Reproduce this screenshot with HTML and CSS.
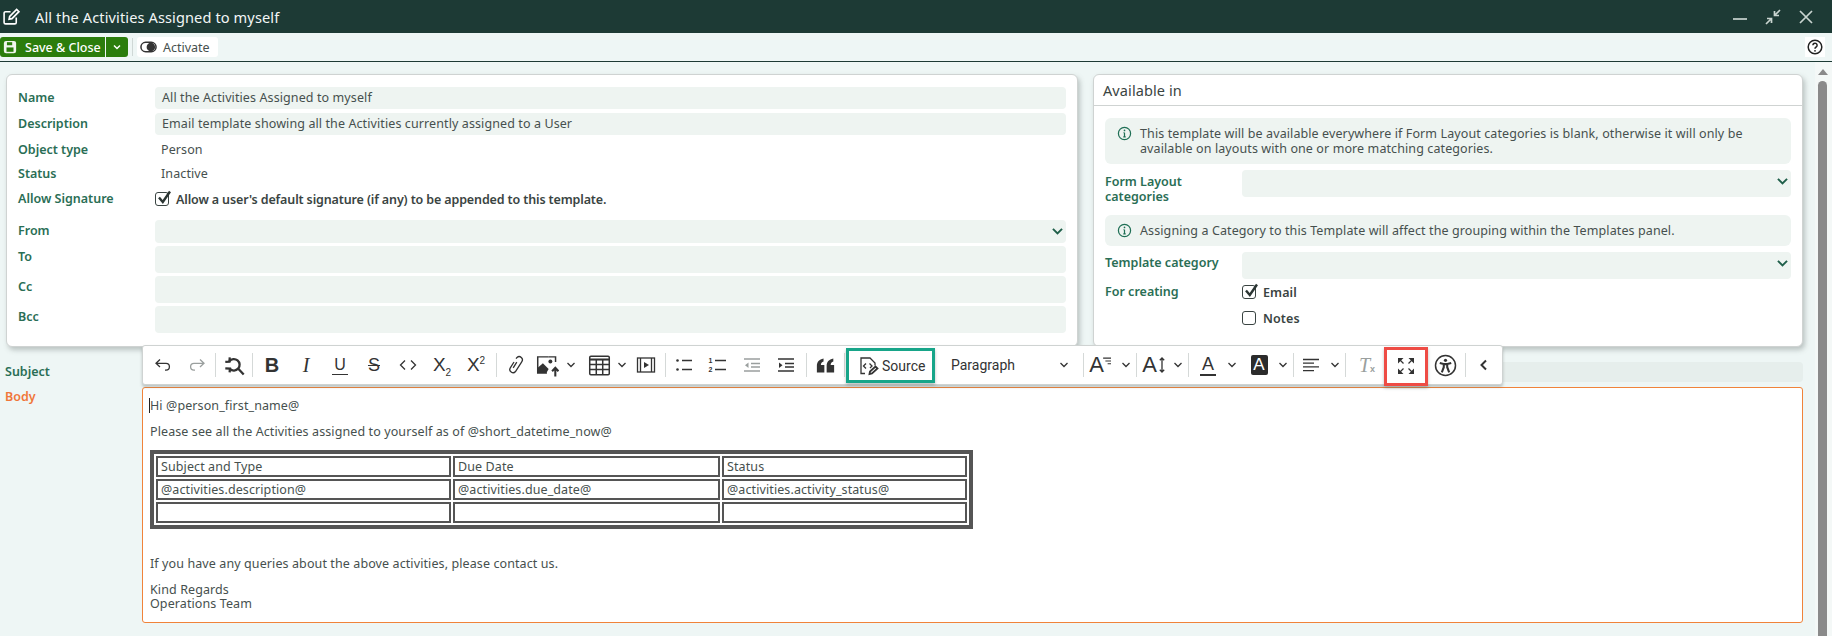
FILE: index.html
```html
<!DOCTYPE html>
<html lang="en">
<head>
    <meta charset="UTF-8">
    <meta name="viewport" content="width=device-width, initial-scale=1.0">
    <title>All the Activities Assigned to myself</title>
    <link rel="stylesheet" href="styles.css">
</head>
<body>
    <header class="title-bar">
        <svg class="ic title-icon" viewBox="0 0 20 20"><path d="M15 11v5.2a1.6 1.6 0 0 1-1.6 1.6H3.800a1.6 1.6 0 0 1-1.6-1.6V6.600A1.6 1.6 0 0 1 3.800 5H9"/><path class="thick" d="M7.500 12.800l.6-3L15.400 2.500l2.400 2.400-7.300 7.300z"/></svg>
        <h1>All the Activities Assigned to myself</h1>
        <div class="window-controls">
            <svg class="ic" viewBox="0 0 20 20"><path d="M3 12h14"/></svg>
            <svg class="ic" viewBox="0 0 20 20"><path d="M3 17l5.500-5.500M8.500 16v-4.500H4M17 3l-5.500 5.500M11.500 4v4.500H16"/></svg>
            <svg class="ic" viewBox="0 0 20 20"><path d="M4 4l12 12M16 4L4 16"/></svg>
        </div>
    </header>

    <div class="action-bar">
        <button class="btn-save">
            <svg class="ic" viewBox="0 0 16 16"><rect class="solid" x="1" y="1" width="14" height="14" rx="2.500"/><rect class="cut" x="4.500" y="2.500" width="6" height="3.500"/><rect class="cut" x="4" y="8.500" width="8" height="5"/></svg>
            Save &amp; Close
        </button>
        <button class="btn-save-more"><svg class="ic" viewBox="0 0 10 10"><path d="M2 3.500l3 3 3-3"/></svg></button>
        <span class="bar-sep"></span>
        <button class="btn-plain">
            <svg class="toggle-icon" viewBox="0 0 18 12"><rect x="1" y="1" width="16" height="10" rx="5" fill="none" stroke="#333" stroke-width="1.600"/><circle cx="11.500" cy="6" r="4.500" fill="#333"/></svg>
            Activate
        </button>
        <span class="help-box"><svg viewBox="0 0 16 16"><circle cx="8" cy="8" r="6.800" fill="none" stroke="#222" stroke-width="1.500"/><path d="M5.900 6.300a2.100 2.100 0 1 1 3.300 1.700c-.8.500-1.200.9-1.200 1.700" fill="none" stroke="#222" stroke-width="1.500"/><circle cx="8" cy="11.800" r=".9" fill="#222"/></svg></span>
    </div>

    <div class="page">
        <main class="content">
            <div class="cards">
                <section class="card card-main">
                    <div class="row"><label>Name</label><div class="field">All the Activities Assigned to myself</div></div>
                    <div class="row"><label>Description</label><div class="field">Email template showing all the Activities currently assigned to a User</div></div>
                    <div class="row row-object"><label>Object type</label><div class="static">Person</div></div>
                    <div class="row row-tight"><label>Status</label><div class="static">Inactive</div></div>
                    <div class="row row-sign">
                        <label>Allow Signature</label>
                        <div class="check-line">
                            <span class="checkbox checked"><svg viewBox="0 0 16 16"><path d="M3 7.500l3.800 4.500L14 1.500"/></svg></span>
                            <strong>Allow a user's default signature (if any) to be appended to this template.</strong>
                        </div>
                    </div>
                    <div class="row row-mail">
                        <label>From</label>
                        <div class="field field-select">
                            <svg class="ic chev" viewBox="0 0 10 10"><path d="M1.500 3l3.500 3.500L8.500 3"/></svg>
                        </div>
                    </div>
                    <div class="row row-mail"><label>To</label><div class="field field-tall"></div></div>
                    <div class="row row-mail"><label>Cc</label><div class="field field-tall"></div></div>
                    <div class="row row-mail"><label>Bcc</label><div class="field field-tall"></div></div>
                </section>

                <section class="card card-side">
                    <h2>Available in</h2>
                    <div class="card-body">
                        <div class="info">
                            <svg class="info-icon" viewBox="0 0 16 16"><circle cx="8" cy="8" r="6.500"/><path d="M8 7.200v4.300M6.700 11.500h2.600M6.900 7.200H8"/><circle class="dot" cx="8" cy="4.700" r=".9"/></svg>
                            <p>This template will be available everywhere if Form Layout categories is blank, otherwise it will only be available on layouts with one or more matching categories.</p>
                        </div>
                        <div class="row row-layout">
                            <label class="label-wrap">Form Layout categories</label>
                            <div class="field field-tall field-select">
                                <svg class="ic chev" viewBox="0 0 10 10"><path d="M1.500 3l3.500 3.500L8.500 3"/></svg>
                            </div>
                        </div>
                        <div class="info">
                            <svg class="info-icon" viewBox="0 0 16 16"><circle cx="8" cy="8" r="6.500"/><path d="M8 7.200v4.300M6.700 11.500h2.600M6.900 7.200H8"/><circle class="dot" cx="8" cy="4.700" r=".9"/></svg>
                            <p>Assigning a Category to this Template will affect the grouping within the Templates panel.</p>
                        </div>
                        <div class="row row-category">
                            <label>Template category</label>
                            <div class="field field-tall field-select">
                                <svg class="ic chev" viewBox="0 0 10 10"><path d="M1.500 3l3.500 3.500L8.500 3"/></svg>
                            </div>
                        </div>
                        <div class="row">
                            <label>For creating</label>
                            <div class="check-list">
                                <div class="check-line">
                                    <span class="checkbox checked"><svg viewBox="0 0 16 16"><path d="M3 7.500l3.800 4.500L14 1.500"/></svg></span>
                                    <b>Email</b>
                                </div>
                                <div class="check-line">
                                    <span class="checkbox"></span>
                                    <b>Notes</b>
                                </div>
                            </div>
                        </div>
                    </div>
                </section>
            </div>

            <div class="subject-row">
                <label>Subject</label>
                <div class="field"></div>
            </div>

            <div class="body-row">
                <label>Body</label>
                <div class="editor-wrap">
                    <div class="toolbar">
                        <button class="tb"><svg class="ic" viewBox="0 0 20 20"><path d="M7 4.500L3 8.300l4 3.700M3 8.300h10a3.400 3.400 0 0 1 0 6.800h-1"/></svg></button>
                        <button class="tb off"><svg class="ic" viewBox="0 0 20 20"><path d="M13 4.500l4 3.800-4 3.700M17 8.300H7a3.400 3.400 0 0 0 0 6.800h1"/></svg></button>
                        <span class="sep"></span>
                        <button class="tb"><svg class="ic ic-find" viewBox="0 0 20 20"><path d="M5.500 6.300A5 5 0 1 1 6 13"/><path d="M13.300 12.800l4.700 5M2 6.800l3.600-.2.300-3.600M2 12.500l4 .2-.2 3.300"/></svg></button>
                        <span class="sep"></span>
                        <button class="tb ml1"><span class="t-bold">B</span></button>
                        <button class="tb"><span class="t-italic">I</span></button>
                        <button class="tb"><span class="t-under">U</span></button>
                        <button class="tb"><span class="t-strike">S</span></button>
                        <button class="tb"><svg class="ic" viewBox="0 0 20 20"><path d="M7 5.500L2.500 10 7 14.500M13 5.500l4.500 4.500-4.500 4.500"/></svg></button>
                        <button class="tb"><span class="t-script">X<sub>2</sub></span></button>
                        <button class="tb"><span class="t-script">X<sup>2</sup></span></button>
                        <span class="sep ml2"></span>
                        <button class="tb"><svg class="ic" viewBox="0 0 20 20"><path d="M11 3.600l1-1.100a3.200 3.200 0 0 1 4.700 4.300l-6.200 9.700a3.200 3.200 0 0 1-5.200-3.700L9 7M8.200 12.800l3.600-5.600"/></svg></button>
                        <button class="tb tb-split"><svg class="ic ic-large" viewBox="0 0 20 20"><path d="M11 2.500H1.500v14h8"/><path d="M17 7V2.500h-6"/><path class="solid" d="M1.500 16.500V12L6 8l5 5-2 3.500z"/><circle class="solid" cx="12.500" cy="6.500" r="1.700"/><path class="thick" d="M14 15l2.800-3 2.700 3M16.800 12v7.500"/></svg></button>
                        <button class="tb-chev"><svg class="ic" viewBox="0 0 10 10"><path d="M1.500 3l3.500 3.500L8.500 3"/></svg></button>
                        <button class="tb tb-split ml4"><svg class="ic ic-large" viewBox="0 0 20 20"><rect x="1.500" y="2" width="17" height="16" rx="1"/><path class="thick" d="M1.500 4.800h17"/><path d="M1.500 9.200h17M1.500 13.500h17M7.200 5v13M12.800 5v13"/></svg></button>
                        <button class="tb-chev tb-chev-sm"><svg class="ic" viewBox="0 0 10 10"><path d="M1.500 3l3.500 3.500L8.500 3"/></svg></button>
                        <button class="tb"><svg class="ic" viewBox="0 0 20 20"><rect x="1.500" y="3" width="17" height="14"/><path d="M4.500 3v14M15.500 3v14"/><path class="solid" d="M8 7l5 3-5 3z"/></svg></button>
                        <span class="sep ml1"></span>
                        <button class="tb"><svg class="ic" viewBox="0 0 20 20"><path d="M8 5.500h10M8 14.500h10"/><circle class="solid" cx="3.500" cy="5.500" r="1.300"/><circle class="solid" cx="3.500" cy="14.500" r="1.300"/></svg></button>
                        <button class="tb"><span class="t-num">1<br>2</span><svg class="ic ic-num" viewBox="0 0 14 20"><path d="M2 5.500h11M2 14.500h11"/></svg></button>
                        <button class="tb off"><svg class="ic" viewBox="0 0 20 20"><path d="M2 4h16M9 8.500h9M9 12h9M2 16h16"/><path class="solid" d="M6.500 7.500v5.500L3 10.200z"/></svg></button>
                        <button class="tb"><svg class="ic" viewBox="0 0 20 20"><path d="M2 4h16M9 8.500h9M9 12h9M2 16h16"/><path class="solid" d="M3 7.500v5.500l3.500-2.800z"/></svg></button>
                        <span class="sep ml2"></span>
                        <button class="tb"><svg class="ic ic-large" viewBox="0 0 20 20"><path class="solid" d="M2.500 16V10.500C2.500 7 4.500 4.700 8.300 4v2.600C6.800 7 6 8 6 9.500h3V16zM11 16V10.500C11 7 13 4.700 16.800 4v2.600c-1.500.4-2.300 1.400-2.300 2.900h3V16z"/></svg></button>
                        <span class="sep ml1"></span>
                        <button class="tb-source">
                            <svg class="ic" viewBox="0 0 22 22"><path d="M8 18.500H4V3h9l5 5v2.500"/><path d="M9 8.500l-2.500 2.500L9 13.500M12.500 8.500l2.500 2.500-2 2"/><path class="thick" d="M12.500 19l.5-2.500 5.500-5 2 2-5.500 5z"/></svg>
                            <span>Source</span>
                        </button>
                        <button class="tb-format"><span>Paragraph</span><svg class="ic" viewBox="0 0 10 10"><path d="M1.500 3l3.500 3.500L8.500 3"/></svg></button>
                        <span class="sep"></span>
                        <button class="tb tb-split"><span class="t-font">A</span><svg class="ic ic-lines" viewBox="0 0 8 8"><path d="M1 1h7M3 3.500h5M5 6h3"/></svg></button>
                        <button class="tb-chev ml2"><svg class="ic" viewBox="0 0 10 10"><path d="M1.500 3l3.500 3.500L8.500 3"/></svg></button>
                        <span class="sep"></span>
                        <button class="tb tb-split ml1"><span class="t-font">A</span><svg class="ic ic-arrow" viewBox="0 0 8 20"><path d="M4 3v14M1.800 5.200L4 3l2.200 2.200M1.800 14.800L4 17l2.200-2.200"/></svg></button>
                        <button class="tb-chev"><svg class="ic" viewBox="0 0 10 10"><path d="M1.500 3l3.500 3.500L8.500 3"/></svg></button>
                        <span class="sep"></span>
                        <button class="tb tb-split ml3"><span class="t-color">A</span></button>
                        <button class="tb-chev"><svg class="ic" viewBox="0 0 10 10"><path d="M1.500 3l3.500 3.500L8.500 3"/></svg></button>
                        <button class="tb tb-split ml3"><span class="t-mark">A</span></button>
                        <button class="tb-chev"><svg class="ic" viewBox="0 0 10 10"><path d="M1.500 3l3.500 3.500L8.500 3"/></svg></button>
                        <span class="sep"></span>
                        <button class="tb tb-split ml1"><svg class="ic" viewBox="0 0 20 20"><path d="M2 4.500h16M2 8.200h11M2 11.900h16M2 15.600h11"/></svg></button>
                        <button class="tb-chev"><svg class="ic" viewBox="0 0 10 10"><path d="M1.500 3l3.500 3.500L8.500 3"/></svg></button>
                        <span class="sep"></span>
                        <button class="tb off ml3"><span class="t-clear">T<small>x</small></span></button>
                        <button class="tb-full">
                            <svg class="ic" viewBox="0 0 20 20"><path class="solid" d="M2 7.500V2h5.500zM12.500 2H18v5.500zM18 12.500V18h-5.500zM7.500 18H2v-5.500z"/><path d="M3.500 3.500L7.500 7.500M16.500 3.500L12.500 7.500M16.500 16.500L12.500 12.500M3.500 16.500L7.500 12.500"/></svg>
                        </button>
                        <button class="tb"><svg class="ic ic-large" viewBox="0 0 20 20"><circle cx="10" cy="10" r="8.700"/><circle class="solid" cx="10" cy="5.500" r="1.400"/><path class="thick" d="M5 7.800l3.500 1v2.700L6.800 16M15 7.800l-3.500 1v2.700l1.700 4.500M8.500 8.800h3"/></svg></button>
                        <span class="sep ml2"></span>
                        <button class="tb"><svg class="ic bold" viewBox="0 0 20 20"><path d="M12 5.500L7.500 10l4.500 4.500"/></svg></button>
                    </div>
                    <div class="editor">
                        <p class="greeting"><span class="caret"></span>Hi @person_first_name@</p>
                        <p class="before-table">Please see all the Activities assigned to yourself as of @short_datetime_now@</p>
                        <table>
                            <tr><td class="col-a">Subject and Type</td><td class="col-b">Due Date</td><td>Status</td></tr>
                            <tr><td>@activities.description@</td><td>@activities.due_date@</td><td>@activities.activity_status@</td></tr>
                            <tr><td>&nbsp;</td><td></td><td></td></tr>
                        </table>
                        <p class="after-table">If you have any queries about the above activities, please contact us.</p>
                        <p class="sign-off">Kind Regards<br>Operations Team</p>
                    </div>
                </div>
            </div>
        </main>
        <div class="scrollbar">
            <span class="scroll-up"></span>
            <span class="scroll-thumb"></span>
        </div>
    </div>
</body>
</html>
```

FILE: styles.css
```css
* {
    box-sizing: border-box;
}

html, body {
    height: 100%;
}

body {
    margin: 0;
    overflow: hidden;
    display: flex;
    flex-direction: column;
    background-color: #eef6f5;
    color: #46504e;
    font-family: "Noto Sans", Arial, sans-serif;
    font-size: 12.5px;
    letter-spacing: 0.1px;
}

button {
    font: inherit;
    letter-spacing: inherit;
    border: none;
    background: none;
    padding: 0;
    margin: 0;
    color: inherit;
}

.ic {
    fill: none;
    stroke: currentColor;
    stroke-width: 1.3;
    display: block;
}

.ic .solid {
    fill: currentColor;
    stroke: none;
}

.ic .cut {
    fill: #2b7d0c;
    stroke: none;
}

.ic .thick {
    stroke-width: 1.8;
}

.ic.bold {
    stroke-width: 2;
}

.ml1 {
    margin-left: 1px;
}

.ml2 {
    margin-left: 2px;
}

.ml3 {
    margin-left: 3px;
}

.ml4 {
    margin-left: 4px;
}

/* title bar */
.title-bar {
    height: 33px;
    flex: none;
    display: flex;
    align-items: center;
    background-color: #1d3a35;
    color: #ffffff;
    padding-left: 2px;
}

.title-bar h1 {
    margin: 0 0 0 14px;
    font-size: 14.6px;
    font-weight: 400;
    color: #f2f6f5;
}

.title-icon {
    width: 19px;
    height: 19px;
    stroke-width: 1.7;
}

.window-controls {
    margin-left: auto;
    display: flex;
    gap: 13px;
    padding-right: 16px;
    color: #c9d4d0;
}

.window-controls .ic {
    width: 20px;
    height: 20px;
    stroke-width: 1.700;
}

/* action bar */
.action-bar {
    height: 29px;
    flex: none;
    display: flex;
    align-items: flex-start;
    padding-top: 4px;
    border-bottom: 1px solid #1d3a35;
}

.btn-save {
    height: 20px;
    width: 105px;
    display: flex;
    align-items: center;
    gap: 8px;
    padding-left: 3px;
    background-color: #2b7d0c;
    color: #ffffff;
    font-weight: 500;
    border-radius: 3px 0 0 3px;
    letter-spacing: 0;
}

.btn-save .ic {
    width: 14px;
    height: 14px;
}

.btn-save .ic .solid {
    fill: #f1f6ee;
}

.btn-save-more {
    height: 20px;
    width: 22px;
    margin-left: 1px;
    background-color: #2b7d0c;
    color: #ffffff;
    border-radius: 0 3px 3px 0;
    display: flex;
    align-items: center;
    justify-content: center;
}

.btn-save-more .ic {
    width: 10px;
    height: 10px;
    stroke-width: 1.500;
}

.bar-sep {
    width: 1px;
    height: 18px;
    margin: 1px 4px 0 4px;
    background-color: #cfd8d6;
}

.btn-plain {
    height: 20px;
    width: 81px;
    display: flex;
    align-items: center;
    gap: 6px;
    padding-left: 3px;
    background-color: #ffffff;
    border-radius: 3px;
    letter-spacing: 0;
}

.toggle-icon {
    width: 17px;
    height: 12px;
}

.help-box {
    margin-left: auto;
    margin-right: 7px;
    width: 20px;
    height: 20px;
    background-color: #ffffff;
    padding: 2px;
}

.help-box svg {
    display: block;
}

/* main area */
.page {
    flex: 1;
    min-height: 0;
    display: flex;
}

.content {
    flex: 1;
    min-width: 0;
    padding: 12px 12px 0 0;
}

.cards {
    display: flex;
    gap: 15px;
    height: 273px;
    padding-left: 6px;
}

.card {
    background-color: #ffffff;
    border: 1px solid #cfd3d2;
    border-radius: 6px;
    box-shadow: 2px 3px 5px rgba(90, 100, 98, 0.35);
}

.card-main {
    width: 1072px;
    flex: none;
    padding: 12px 11px 0 11px;
}

.card-side {
    flex: 1;
    min-width: 0;
}

.card-side h2 {
    margin: 0;
    height: 31px;
    line-height: 30px;
    padding-left: 9px;
    font-size: 14.5px;
    font-weight: 400;
    border-bottom: 1px solid #cfd3d2;
    color: #3a4442;
}

.card-body {
    padding: 12px 11px 0 11px;
}

.row {
    display: grid;
    grid-template-columns: 137px 1fr;
    min-height: 22px;
    margin-bottom: 4px;
}

label {
    color: #2a6e55;
    font-weight: 600;
    line-height: 22px;
    white-space: nowrap;
    letter-spacing: 0;
}

.label-wrap {
    white-space: normal;
    line-height: 15px;
    padding-top: 4px;
    width: 90px;
}

.field {
    position: relative;
    height: 22px;
    line-height: 22px;
    padding-left: 7px;
    background-color: #eef4f1;
    border-radius: 4px;
    white-space: nowrap;
}

.field-tall {
    height: 27px;
}

.field-select {
    height: 23px;
}

.field-tall.field-select {
    height: 27px;
}

/* chevron sits over the select box */
.chev {
    position: absolute;
    right: 2px;
    top: 5px;
    width: 13px;
    height: 13px;
    color: #1f5f4a;
    stroke-width: 1.500;
}

.static {
    line-height: 22px;
    padding-left: 6px;
}

.row-object {
    margin-bottom: 2px;
}

.row-tight {
    margin-bottom: 3px;
}

.row-sign {
    margin-bottom: 10px;
}

.row-mail {
    margin-bottom: 3px;
    min-height: 23px;
}

.check-line {
    display: flex;
    align-items: center;
    gap: 7px;
    height: 22px;
    color: #3a4442;
}

.check-line strong {
    font-weight: 600;
    letter-spacing: -0.13px;
}

.check-line b {
    font-weight: 600;
}

.checkbox {
    width: 14px;
    height: 14px;
    flex: none;
    border: 1px solid #3a4442;
    border-radius: 3px;
    background-color: #ffffff;
}

.checkbox svg {
    display: block;
    width: 16px;
    height: 16px;
    margin: -3px 0 0 0;
    overflow: visible;
    fill: none;
    stroke: #2b3533;
    stroke-width: 2.400;
}

.info {
    display: flex;
    gap: 8px;
    padding: 8px 12px 8px 12px;
    margin-bottom: 6px;
    background-color: #eef4f1;
    border-radius: 6px;
}

.info p {
    margin: 0;
    line-height: 15px;
}

.info-icon {
    width: 15px;
    height: 15px;
    flex: none;
    fill: none;
    stroke: #1f6f55;
    stroke-width: 1.300;
}

.info-icon .dot {
    fill: #1f6f55;
    stroke: none;
}

.row-layout {
    min-height: 27px;
    margin-bottom: 11px;
}

.row-category {
    min-height: 27px;
    margin-bottom: 2px;
}

.check-list {
    display: flex;
    flex-direction: column;
    gap: 4px;
}

.subject-row {
    display: grid;
    grid-template-columns: 142px 1fr;
    margin-top: 15px;
}

.subject-row label {
    padding-left: 5px;
    line-height: 20px;
}

.subject-row .field {
    height: 20px;
    background-color: #e6eeec;
}

.body-row {
    display: grid;
    grid-template-columns: 142px 1fr;
    margin-top: 5px;
}

.body-row label {
    padding-left: 5px;
    line-height: 20px;
    color: #f0763a;
}

.editor-wrap {
    position: relative;
}

/* floating editor toolbar */
.toolbar {
    position: absolute;
    top: -42px;
    left: 0;
    width: 1361px;
    height: 40px;
    display: flex;
    align-items: center;
    padding-left: 3px;
    background-color: #ffffff;
    border: 1px solid #cfd3d2;
    border-radius: 3px;
    box-shadow: 0 2px 3px rgba(90, 100, 98, 0.35);
    color: #333333;
    z-index: 2;
    letter-spacing: 0;
}

.tb {
    width: 34px;
    height: 30px;
    flex: none;
    display: flex;
    align-items: center;
    justify-content: center;
}

.tb .ic {
    width: 20px;
    height: 20px;
}

.tb .ic-large {
    width: 23px;
    height: 23px;
}

.tb .ic-find {
    width: 23px;
    height: 23px;
    stroke-width: 2;
}

.tb-split {
    width: 30px;
}

.tb.off {
    color: #9a9f9e;
}

.tb-chev {
    width: 18px;
    height: 30px;
    flex: none;
    display: flex;
    align-items: center;
    justify-content: center;
}

.tb-chev-sm {
    width: 15px;
}

.tb-chev .ic {
    width: 10px;
    height: 10px;
}

.sep {
    width: 1px;
    height: 24px;
    flex: none;
    margin-right: 1px;
    margin-left: 1px;
    background-color: #d5d9d8;
}

.sep.ml1 {
    margin-left: 2px;
}

.sep.ml2 {
    margin-left: 3px;
}

.t-bold {
    font: bold 20px "Liberation Sans", sans-serif;
}

.t-italic {
    font: italic 20px "Liberation Serif", serif;
}

.t-under {
    font: 16px "Liberation Sans", sans-serif;
    border-bottom: 1.500px solid #333333;
    line-height: 18px;
    padding: 0 2px;
}

.t-strike {
    font: 18px "Liberation Sans", sans-serif;
    text-decoration: line-through;
}

.t-script {
    font: 19px "Liberation Sans", sans-serif;
}

.t-script sub,
.t-script sup {
    font-size: 10px;
    line-height: 0;
}

.t-num {
    font: bold 7px/9px "Liberation Sans", sans-serif;
    margin-right: 1px;
    text-align: center;
}

.tb .ic-num {
    width: 14px;
}

.tb-source {
    width: 89px;
    height: 35px;
    flex: none;
    margin-top: 1px;
    display: flex;
    align-items: center;
    gap: 3px;
    padding-left: 8px;
    border: 3px solid #17a589;
    font-family: Roboto, sans-serif;
    font-size: 14px;
    box-shadow: 0 2px 3px rgba(90, 100, 98, 0.4);
}

.tb-source .ic {
    width: 22px;
    height: 22px;
}

.tb-format {
    width: 147px;
    height: 30px;
    flex: none;
    display: flex;
    align-items: center;
    justify-content: space-between;
    padding: 0 13px 0 16px;
    font-family: Roboto, sans-serif;
    font-size: 14px;
}

.tb-format .ic {
    width: 10px;
    height: 10px;
}

.t-font {
    font: 22px "Liberation Sans", sans-serif;
}

.tb .ic-lines {
    width: 9px;
    height: 9px;
    margin: -8px 0 0 -2px;
    stroke-width: 1;
}

.tb .ic-arrow {
    width: 8px;
    height: 22px;
    margin-left: 1px;
}

.t-color {
    font: 18px/19px "Liberation Sans", sans-serif;
    border-bottom: 2px solid #333333;
    padding: 0 2px;
}

.t-mark {
    width: 17px;
    height: 20px;
    display: block;
    text-align: center;
    font: 17px/20px "Liberation Sans", sans-serif;
    background-color: #2b2b2b;
    color: #ffffff;
    border-radius: 2px;
}

.t-clear {
    font: italic 20px "Liberation Serif", serif;
}

.t-clear small {
    font: bold 9px "Liberation Sans", sans-serif;
}

.tb-full {
    width: 44px;
    height: 39px;
    flex: none;
    margin: 2px 0 0 0;
    display: flex;
    align-items: center;
    justify-content: center;
    border: 3px solid #ee4c45;
    box-shadow: 0 2px 3px rgba(90, 100, 98, 0.4);
}

.tb-full .ic {
    width: 20px;
    height: 20px;
    stroke-width: 1.200;
}

/* editor body */
.editor {
    height: 236px;
    padding: 10px 7px 0 7px;
    background-color: #ffffff;
    border: 1px solid #f0833a;
    border-radius: 3px;
}

.editor p {
    margin: 0;
    line-height: 15px;
    white-space: nowrap;
}

.caret {
    display: inline-block;
    width: 1px;
    height: 15px;
    vertical-align: top;
    margin-left: -1px;
    background-color: #222222;
}

.editor .greeting {
    margin-bottom: 11px;
}

.editor .before-table {
    margin-bottom: 11px;
}

.editor table {
    width: 823px;
    border: 4px solid #555555;
    border-spacing: 2px;
    border-collapse: separate;
}

.editor td {
    height: 21px;
    padding: 0 3px;
    border: 2px solid #555555;
    line-height: 15px;
}

.col-a {
    width: 295px;
}

.col-b {
    width: 267px;
}

.editor .after-table {
    margin: 27px 0 12px 0;
}

.editor .sign-off {
    line-height: 14px;
}

/* fake page scrollbar */
.scrollbar {
    width: 17px;
    flex: none;
    display: flex;
    flex-direction: column;
    align-items: center;
    padding: 7px 2px 0 0;
    background-color: #f4f8f7;
}

.scroll-up {
    width: 0;
    height: 0;
    border-left: 5px solid transparent;
    border-right: 5px solid transparent;
    border-bottom: 6px solid #8a8a8a;
}

.scroll-thumb {
    flex: 1;
    width: 9px;
    margin-top: 6px;
    background-color: #8a8a8a;
    border-radius: 5px 5px 0 0;
}
```
